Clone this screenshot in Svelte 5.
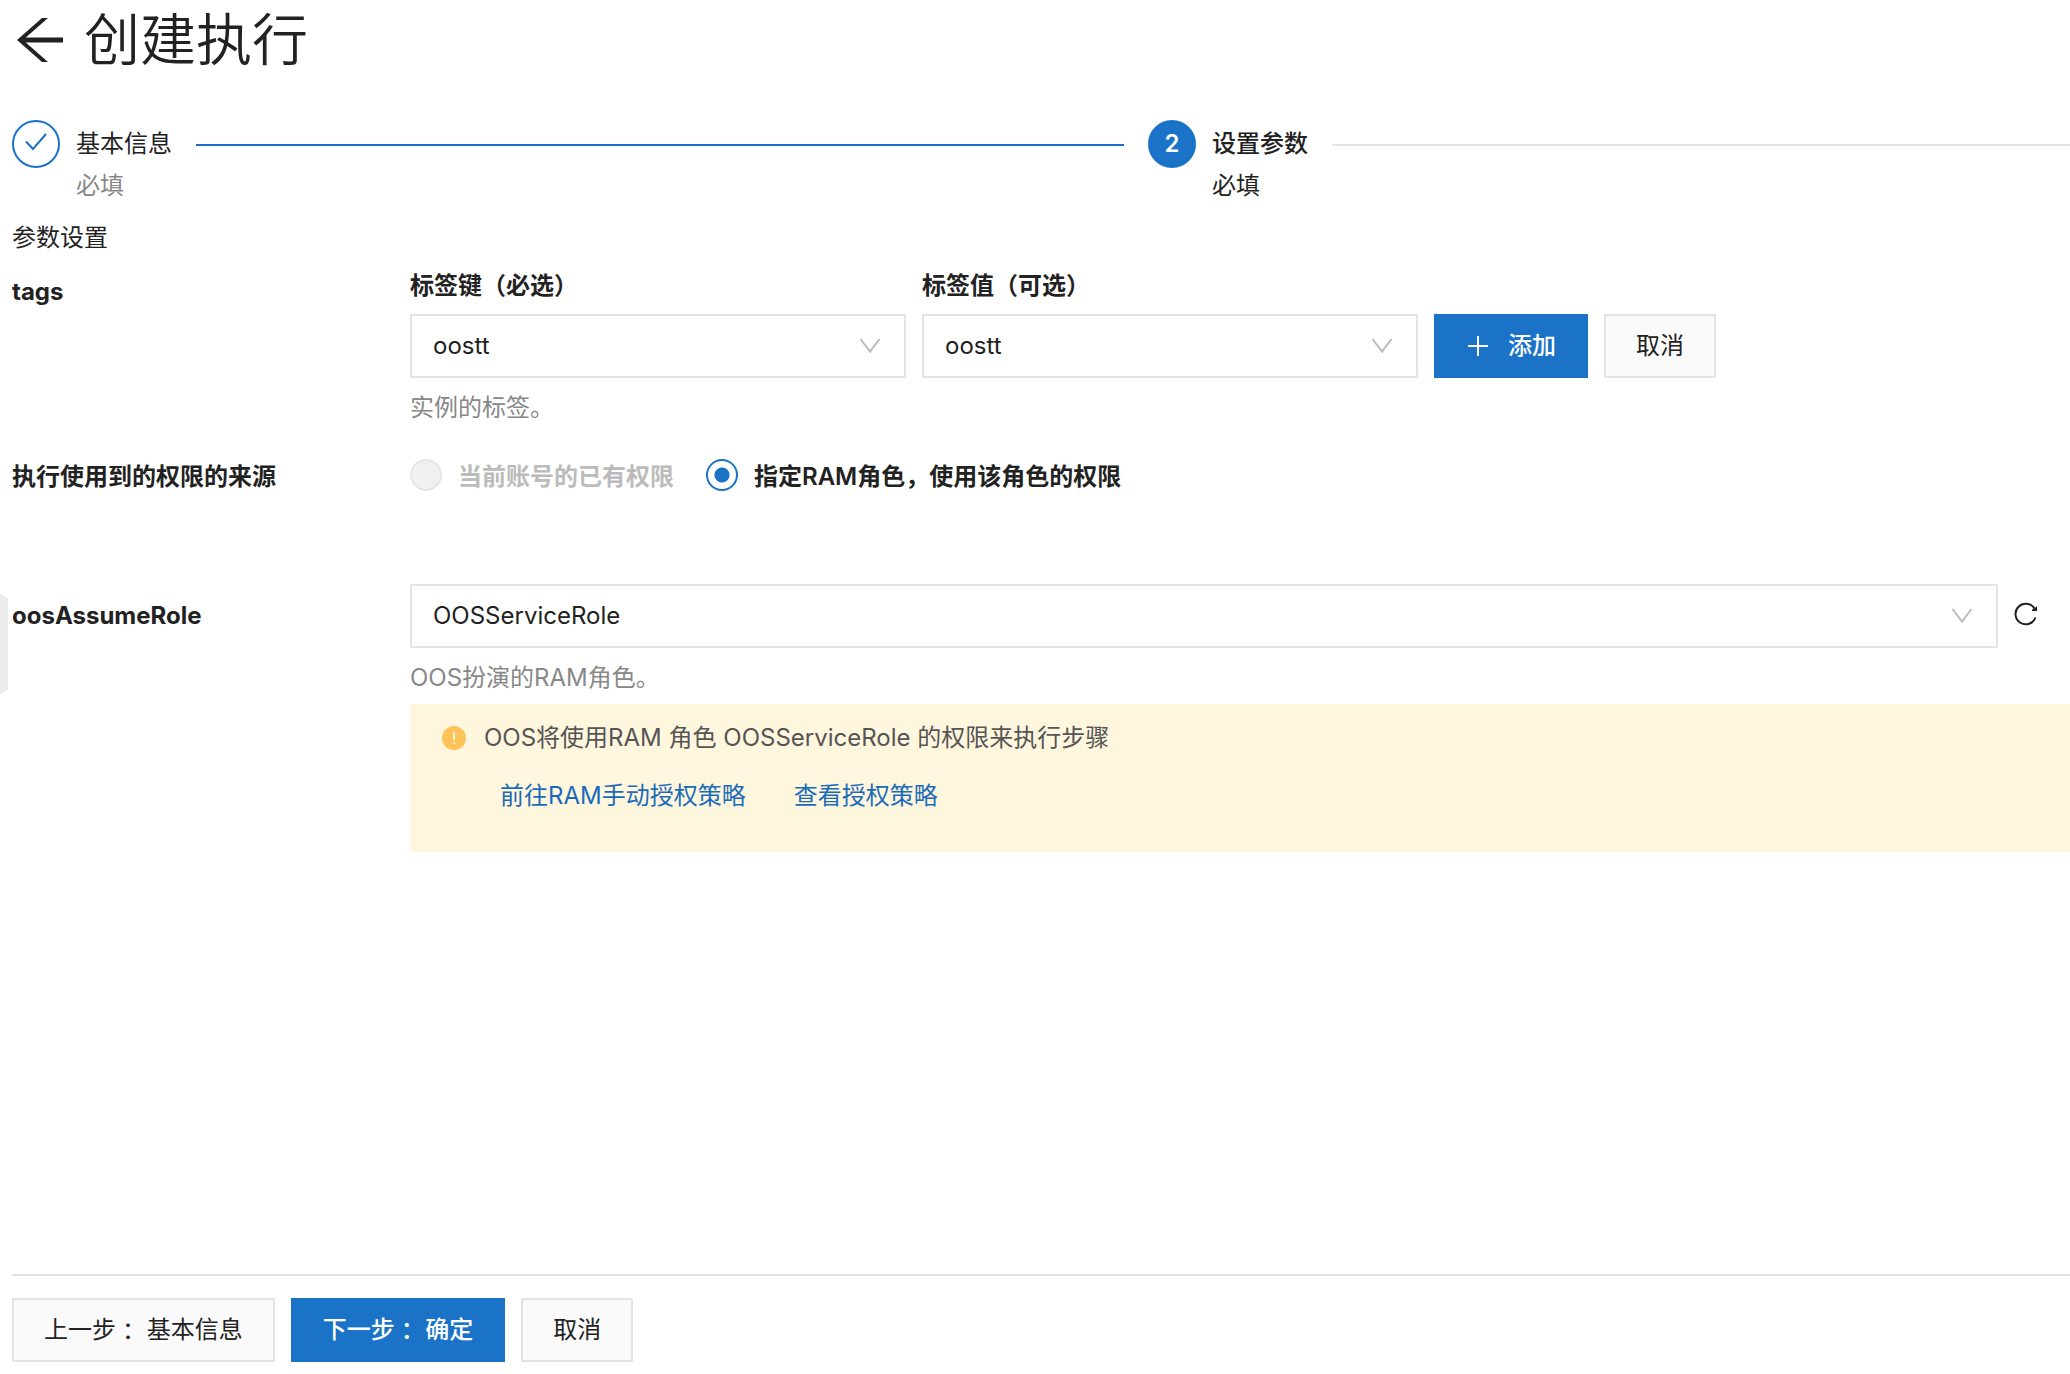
<script>
  const tagOptions = ['oostt'];
  const roleOptions = ['OOSServiceRole'];

  let tagKey = $state('oostt');
  let tagValue = $state('oostt');
  let role = $state('OOSServiceRole');
  let source = $state('ram');
</script>

{#snippet dropdownArrow()}
  <svg class="arrow" viewBox="0 0 22 16" aria-hidden="true">
    <path d="M1.500 1L11 13.500L20.500 1" />
  </svg>
{/snippet}

<div class="page">
  <button class="drawer-handle" type="button" aria-label="展开侧栏"></button>

  <header class="title-bar">
    <a class="back" href="#back" aria-label="返回">
      <svg viewBox="0 0 48 48" aria-hidden="true">
        <path class="shaft" d="M47 24H5" />
        <path class="head" d="M26 2H32L7 24L32 46H26L1 24Z" />
      </svg>
    </a>
    <h1>创建执行</h1>
  </header>

  <ol class="steps">
    <li class="step done">
      <span class="badge">
        <svg viewBox="0 0 24 20" aria-hidden="true"><path d="M2 9.500L9 17L22 2" /></svg>
      </span>
      <div class="step-text">
        <div class="step-head">
          <span class="step-title">基本信息</span>
          <span class="rail"></span>
        </div>
        <p>必填</p>
      </div>
    </li>
    <li class="step current" aria-current="step">
      <span class="badge">2</span>
      <div class="step-text">
        <div class="step-head">
          <span class="step-title">设置参数</span>
          <span class="rail"></span>
        </div>
        <p>必填</p>
      </div>
    </li>
  </ol>

  <main>
    <h2>参数设置</h2>

    <section class="row tags">
      <h3>tags</h3>
      <div class="field">
        <div class="tag-line">
          <div class="tag-field">
            <label for="tag-key">标签键（必选）</label>
            <div class="select">
              <select id="tag-key" bind:value={tagKey}>
                {#each tagOptions as option}<option>{option}</option>{/each}
              </select>
              {@render dropdownArrow()}
            </div>
          </div>
          <div class="tag-field">
            <label for="tag-value">标签值（可选）</label>
            <div class="select">
              <select id="tag-value" bind:value={tagValue}>
                {#each tagOptions as option}<option>{option}</option>{/each}
              </select>
              {@render dropdownArrow()}
            </div>
          </div>
          <button class="btn primary add" type="button">
            <svg class="plus" viewBox="0 0 20 20" aria-hidden="true"><path d="M10 0V20M0 10H20" /></svg>
            <span>添加</span>
          </button>
          <button class="btn" type="button">取消</button>
        </div>
        <p class="help">实例的标签。</p>
      </div>
    </section>

    <section class="row source">
      <h3 id="source-label">执行使用到的权限的来源</h3>
      <div class="radios" role="radiogroup" aria-labelledby="source-label">
        <label class="radio disabled">
          <input type="radio" name="source" value="account" bind:group={source} disabled />
          当前账号的已有权限
        </label>
        <label class="radio">
          <input type="radio" name="source" value="ram" bind:group={source} />
          指定RAM角色，使用该角色的权限
        </label>
      </div>
    </section>

    <section class="row role">
      <h3><label for="role">oosAssumeRole</label></h3>
      <div class="field">
        <div class="role-line">
          <div class="select">
            <select id="role" bind:value={role}>
              {#each roleOptions as option}<option>{option}</option>{/each}
            </select>
            {@render dropdownArrow()}
          </div>
          <button class="refresh" type="button" aria-label="刷新">
            <svg viewBox="0 0 24 24" aria-hidden="true">
              <path class="ring" d="M21.500 15.500A10.300 10.300 0 1 1 20.500 6.500" />
              <path class="tip" d="M23 4V9H18L18.500 7L21 6Z" />
            </svg>
          </button>
        </div>
        <p class="help">OOS扮演的RAM角色。</p>
        <div class="notice">
          <svg class="warn" viewBox="0 0 24 24" aria-hidden="true">
            <circle cx="12" cy="12" r="12" />
            <path d="M12 6V14M12 16.500V18" />
          </svg>
          <div>
            <p>OOS将使用RAM 角色 OOSServiceRole 的权限来执行步骤</p>
            <nav>
              <a href="#authorize">前往RAM手动授权策略</a>
              <a href="#policy">查看授权策略</a>
            </nav>
          </div>
        </div>
      </div>
    </section>
  </main>

  <footer>
    <button class="btn" type="button">上一步<span class="colon">：</span> 基本信息</button>
    <button class="btn primary" type="button">下一步<span class="colon">：</span> 确定</button>
    <button class="btn" type="button">取消</button>
  </footer>
</div>

<style>
  :global(body) {
    margin: 0;
    background: #fff;
  }

  .page,
  .page * {
    box-sizing: border-box;
  }

  .page {
    position: relative;
    display: flex;
    flex-direction: column;
    min-height: 100vh;
    padding: 0 0 12px 12px;
    overflow: hidden;
    color: #222;
    font-family: Inter, "Noto Sans CJK SC", sans-serif;
    font-size: 24px;
    line-height: 36px;
  }

  h1, h2, h3, p, ol {
    margin: 0;
    padding: 0;
  }

  button, select, input {
    margin: 0;
    color: inherit;
    font: inherit;
  }

  svg {
    display: block;
    flex: none;
    fill: none;
    stroke: currentColor;
  }

  .drawer-handle {
    position: absolute;
    top: 594px;
    left: 0;
    width: 8px;
    height: 100px;
    padding: 0;
    border: 0;
    background: #ebebeb;
    clip-path: polygon(0 0, 100% 4px, 100% 96px, 0 100%);
  }

  .title-bar {
    display: flex;
    align-items: center;
    gap: 20px;
    height: 80px;
    padding-left: 4px;
  }

  .back {
    color: #222;
  }

  .back svg {
    width: 48px;
    height: 48px;
  }

  .shaft {
    stroke-width: 5;
  }

  .head {
    fill: currentColor;
    stroke: none;
  }

  h1 {
    font-size: 56px;
    font-weight: 350;
    line-height: 80px;
  }

  .steps {
    display: grid;
    grid-template-columns: 1136fr 922fr;
    margin-top: 40px;
    list-style: none;
  }

  .step {
    display: flex;
    gap: 16px;
    min-width: 0;
  }

  .badge {
    display: flex;
    flex: none;
    align-items: center;
    justify-content: center;
    width: 48px;
    height: 48px;
    border: 2px solid #1b73c7;
    border-radius: 50%;
    color: #1b73c7;
  }

  .badge svg {
    width: 24px;
    height: 20px;
    margin-bottom: 4px;
    stroke-width: 2;
  }

  .current .badge {
    background: #1b73c7;
    color: #fff;
    font-weight: 600;
  }

  .step-text {
    flex: 1;
    min-width: 0;
  }

  .step-head {
    display: flex;
    align-items: center;
    gap: 24px;
    height: 48px;
    white-space: nowrap;
  }

  .rail {
    flex: 1;
    height: 2px;
    margin: 2px 24px 0 0;
    background: #1b73c7;
  }

  .current .rail {
    margin-right: 0;
    background: #e3e3e3;
  }

  .current .step-title {
    font-weight: 500;
  }

  .done p,
  .help {
    color: #888;
  }

  h2 {
    margin-top: 16px;
    font-size: 24px;
    font-weight: 400;
    line-height: 36px;
  }

  h3 {
    font-size: 24px;
    font-weight: 700;
    line-height: 36px;
  }

  .row {
    display: grid;
    grid-template-columns: 398px 1fr;
  }

  .tags {
    margin-top: 12px;
  }

  .tags h3 {
    padding-top: 6px;
  }

  .tag-line {
    display: flex;
    align-items: flex-end;
    gap: 16px;
  }

  .tag-field {
    flex: 0 1 496px;
  }

  .tag-field label {
    display: block;
    margin-bottom: 10px;
    font-weight: 600;
  }

  .select {
    position: relative;
  }

  select {
    display: block;
    width: 100%;
    height: 64px;
    padding: 0 60px 0 21px;
    border: 2px solid #e3e3e3;
    border-radius: 0;
    background: #fff;
    appearance: none;
  }

  .arrow {
    position: absolute;
    top: 24px;
    right: 25px;
    width: 22px;
    height: 16px;
    color: #bbb;
    stroke-width: 2;
    pointer-events: none;
  }

  .btn {
    display: flex;
    flex: none;
    align-items: center;
    justify-content: center;
    height: 64px;
    padding: 0 30px;
    border: 2px solid #e3e3e3;
    border-radius: 0;
    background: #fafafa;
    white-space: pre;
  }

  .primary {
    border-color: #1b73c7;
    background: #1b73c7;
    color: #fff;
    font-weight: 500;
  }

  .add {
    gap: 20px;
    padding-left: 32px;
  }

  .plus {
    width: 20px;
    height: 20px;
    stroke-width: 2;
  }

  .colon {
    font-family: "Noto Sans CJK TC", sans-serif;
  }

  .help {
    margin-top: 12px;
  }

  .source {
    align-items: center;
    margin-top: 33px;
  }

  .radios {
    display: flex;
    gap: 32px;
  }

  .radio {
    display: flex;
    align-items: flex-start;
    gap: 16px;
    font-weight: 600;
  }

  .disabled {
    color: #bbb;
  }

  .radio input {
    width: 32px;
    height: 32px;
    border: 2px solid #1b73c7;
    border-radius: 50%;
    background: #fff;
    appearance: none;
  }

  .radio input:checked {
    background: radial-gradient(circle, #1b73c7 7px, #fff 8px);
  }

  .radio input:disabled {
    border-color: #e6e6e6;
    background: #f0f0f0;
  }

  .role {
    margin-top: 89px;
  }

  .role h3 {
    padding-top: 14px;
  }

  .role-line {
    display: flex;
    align-items: center;
    gap: 16px;
    padding-right: 32px;
  }

  .role-line .select {
    flex: 1;
  }

  .refresh {
    padding: 0 0 4px;
    border: 0;
    background: none;
  }

  .refresh svg {
    width: 24px;
    height: 24px;
  }

  .ring {
    stroke-width: 2;
  }

  .tip {
    fill: currentColor;
    stroke: none;
  }

  .notice {
    display: flex;
    gap: 18px;
    margin-top: 8px;
    padding: 16px 32px 38px;
    background: #fff6de;
    color: #555;
  }

  .warn {
    width: 24px;
    height: 24px;
    margin-top: 6px;
    fill: #ffc35a;
    stroke: none;
  }

  .warn path {
    stroke: #fff6de;
    stroke-width: 2;
  }

  .notice nav {
    display: flex;
    gap: 48px;
    margin-top: 22px;
    padding-left: 16px;
  }

  .notice a {
    color: #1b6cb8;
    text-decoration: none;
  }

  footer {
    display: flex;
    gap: 16px;
    margin-top: auto;
    padding-top: 22px;
    border-top: 2px solid #e3e3e3;
  }
</style>
